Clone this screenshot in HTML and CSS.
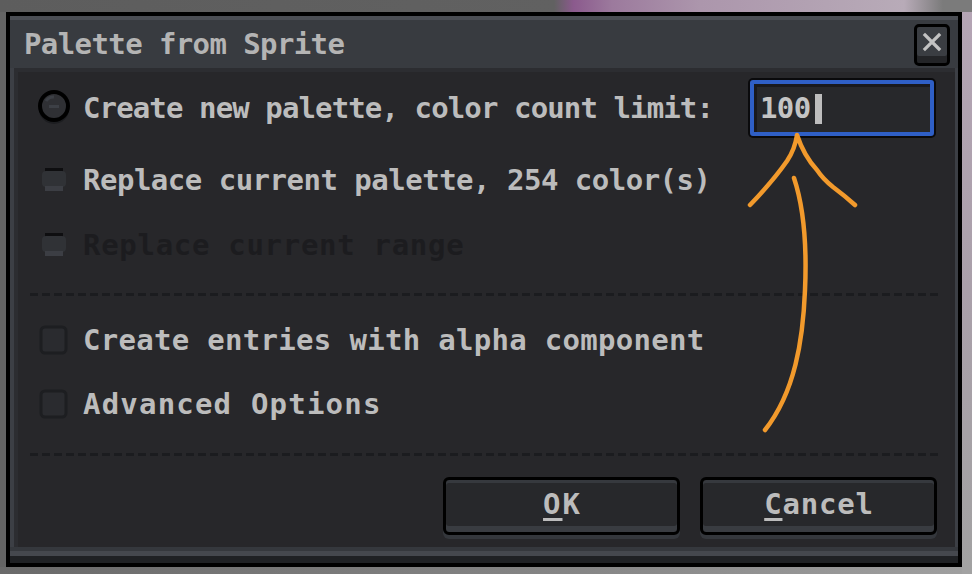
FILE: index.html
```html
<!DOCTYPE html>
<html>
<head>
<meta charset="utf-8">
<link rel="stylesheet" href="styles.css">
</head>
<body>
<div class="stage">
  <div class="window">
    <div class="titlebar">
      <span class="title">Palette from Sprite</span>
      <div class="close">
        <svg width="20" height="20" viewBox="0 0 20 20"><path d="M3 3 L17 17 M17 3 L3 17" stroke="#c2c2c2" stroke-width="3.2" stroke-linecap="square"/></svg>
      </div>
    </div>
    <div class="body">
      <div class="content">
        <div class="row r1">
          <span class="icon">
            <svg width="36" height="38" viewBox="0 0 36 38"><circle cx="18" cy="20" r="15" fill="#1c1d20"/><circle cx="18" cy="17" r="14" fill="#2f3034" stroke="#000" stroke-width="4"/><path d="M10 12 A9 9 0 0 1 18 8" stroke="#3c3f45" stroke-width="3" fill="none"/><rect x="13" y="16" width="10" height="3" fill="#3d4046"/></svg>
          </span>
          <span class="label l1">Create new palette, color count limit:</span>
          <div class="input"><span class="val">100</span><span class="caret"></span></div>
        </div>
        <div class="row r2">
          <span class="icon">
            <svg width="26" height="26" viewBox="0 0 26 26"><rect x="4" y="1" width="18" height="4" fill="#0e0e10"/><rect x="1" y="4" width="24" height="16" rx="4" fill="#303236"/><rect x="4" y="19" width="18" height="5" fill="#3c3e44"/></svg>
          </span>
          <span class="label l2">Replace current palette, 254 color(s)</span>
        </div>
        <div class="row r3">
          <span class="icon">
            <svg width="26" height="26" viewBox="0 0 26 26"><rect x="4" y="1" width="18" height="4" fill="#0e0e10"/><rect x="1" y="4" width="24" height="16" rx="4" fill="#303236"/><rect x="4" y="19" width="18" height="5" fill="#3c3e44"/></svg>
          </span>
          <span class="label l3 disabled">Replace current range</span>
        </div>
        <div class="sep s1"></div>
        <div class="row r4">
          <span class="icon">
            <svg width="30" height="30" viewBox="0 0 30 30"><rect x="2" y="2" width="25" height="26" rx="4" fill="#2a2b2f" stroke="#1d1e21" stroke-width="3"/></svg>
          </span>
          <span class="label l4">Create entries with alpha component</span>
        </div>
        <div class="row r5">
          <span class="icon">
            <svg width="30" height="30" viewBox="0 0 30 30"><rect x="2" y="2" width="25" height="26" rx="4" fill="#2a2b2f" stroke="#1d1e21" stroke-width="3"/></svg>
          </span>
          <span class="label l5">Advanced Options</span>
        </div>
        <div class="sep s2"></div>
        <div class="buttons">
          <div class="btn ok"><span class="u">O</span>K</div>
          <div class="btn cancel"><span class="u">C</span>ancel</div>
        </div>
      </div>
      <div class="rim1"></div>
      <div class="rim2"></div>
    </div>
    <div class="shade"></div>
  </div>
  <svg class="annot" width="972" height="574" viewBox="0 0 972 574">
    <path d="M750 205 Q773 181 787 161 Q795 149 797 135 Q804 156 817 170 Q823 179 833 187 Q845 196 855 205" fill="none" stroke="#f29a2c" stroke-width="4.5" stroke-linecap="round" stroke-linejoin="round"/>
    <path d="M794 178 C803 205 807 245 805 290 C803 340 795 392 765 430" fill="none" stroke="#f29a2c" stroke-width="4.5" stroke-linecap="round"/>
  </svg>
</div>
</body>
</html>
```
FILE: styles.css
```css
html, body {
  margin: 0;
  padding: 0;
}
body {
  width: 972px;
  height: 574px;
  overflow: hidden;
  font-family: "DejaVu Sans Mono", "Liberation Mono", monospace;
  background:
    linear-gradient(90deg, #5d5d5d 0, #616161 57%, #8b5a8d 59%, #9c7a9d 63%, #ac96ac 72%, #b3a3b3 85%, #b8abb8 93%, #7b7b7b 97%) 0 0 / 100% 12px no-repeat,
    linear-gradient(180deg, #b5a5b5 0, #aaa0aa 50%, #a2a2a2 100%) 100% 0 / 10px 100% no-repeat,
    linear-gradient(90deg, #6a6a6a 0, #868686 60%, #a0a0a0 100%) 0 100% / 100% 7px no-repeat,
    #646464;
}
.stage {
  position: relative;
  height: 574px;
  box-sizing: border-box;
  padding: 12px 0 0 6px;
}
.window {
  width: 956px;
  height: 555px;
  box-sizing: border-box;
  border: 4px solid #000;
  background: #3c3f45;
  display: flex;
  flex-direction: column;
}
.titlebar {
  height: 52px;
  box-sizing: border-box;
  border-top: 4px solid #4b4e54;
  background: #383b40;
  display: flex;
  align-items: center;
  padding: 0 8px 0 14px;
}
.title {
  font-size: 29px;
  font-weight: bold;
  letter-spacing: -0.6px;
  color: #b4b4b4;
  line-height: 1;
  flex: 1;
}
.close {
  width: 36px;
  height: 42px;
  box-sizing: border-box;
  border: 3px solid #000;
  border-radius: 5px;
  background: #3a3d42;
  box-shadow: inset 0 -7px 0 #232427;
  align-self: flex-start;
  margin-top: 4px;
  display: flex;
  align-items: center;
  justify-content: center;
  padding-bottom: 6px;
}
.close svg { display: block; }
.body {
  display: flex;
  flex-direction: column;
}
.content {
  height: 479px;
  box-sizing: border-box;
  margin: 0 3px 0 4px;
  border-top: 4px solid #2c2d31;
  border-left: 4px solid #2c2d31;
  background: #27272a;
  padding-top: 4px;
  display: flex;
  flex-direction: column;
}
.rim1 { height: 4px; background: #35383d; }
.rim2 { height: 5px; background: #45484e; }
.shade { height: 7px; background: #1f2124; }
.row {
  height: 64px;
  display: flex;
  align-items: center;
  padding: 0 21px 0 18px;
  flex-shrink: 0;
}
.r2 { margin-top: 8px; }
.r3 { margin-top: 1px; }
.r4 { margin-top: 12px; }
.icon {
  width: 36px;
  height: 40px;
  display: flex;
  align-items: center;
  justify-content: center;
  margin-right: 11px;
  flex-shrink: 0;
}
.icon svg { display: block; }
.label {
  font-size: 29px;
  font-weight: bold;
  letter-spacing: -0.88px;
  color: #bcbcbc;
  line-height: 64px;
  white-space: nowrap;
}
.l2 { letter-spacing: -0.5px; }
.l3 { letter-spacing: 0.7px; }
.l4 { letter-spacing: 0.3px; }
.l5 { letter-spacing: 1.2px; }
.label.disabled { color: #1c1c1f; }
.input {
  margin-left: auto;
  width: 184px;
  height: 56px;
  box-sizing: border-box;
  border: 4px solid #2f5fc6;
  border-radius: 3px;
  box-shadow: 0 0 0 2px #0a0a0c, inset 0 3px 0 #19191c, inset 3px 0 0 #19191c;
  background: #27282b;
  display: flex;
  align-items: center;
  padding-left: 6px;
}
.val {
  font-size: 29px;
  font-weight: bold;
  letter-spacing: -0.6px;
  color: #c4c4c4;
  line-height: 1;
}
.caret {
  width: 7px;
  height: 30px;
  background: #bdbdbd;
  margin-left: 4px;
  margin-top: 2px;
}
.sep {
  height: 3px;
  width: 908px;
  margin-left: 12px;
  background: repeating-linear-gradient(90deg, #1b1c1f 0 8px, transparent 8px 12px);
  flex-shrink: 0;
}
.s1 { margin-top: 16px; }
.s2 { margin-top: 17px; }
.buttons {
  margin-top: 21px;
  display: flex;
  justify-content: flex-end;
  gap: 20px;
  padding-right: 18px;
}
.btn {
  width: 237px;
  height: 58px;
  box-sizing: border-box;
  border: 3px solid #000;
  border-radius: 6px;
  background: #27282b;
  box-shadow: inset 0 3px 0 #36393e, inset 0 -6px 0 #393c41, 0 4px 0 #34373c;
  display: flex;
  align-items: center;
  justify-content: center;
  padding-bottom: 4px;
  font-size: 29px;
  font-weight: bold;
  color: #bcbcbc;
  line-height: 1;
}
.ok { letter-spacing: 2px; padding-left: 2px; }
.cancel { letter-spacing: 0.8px; padding-left: 1px; }
.u {
  text-decoration: underline;
  text-decoration-thickness: 3px;
  text-underline-offset: 4px;
}
.annot {
  position: absolute;
  left: 0;
  top: 0;
  pointer-events: none;
}
```
